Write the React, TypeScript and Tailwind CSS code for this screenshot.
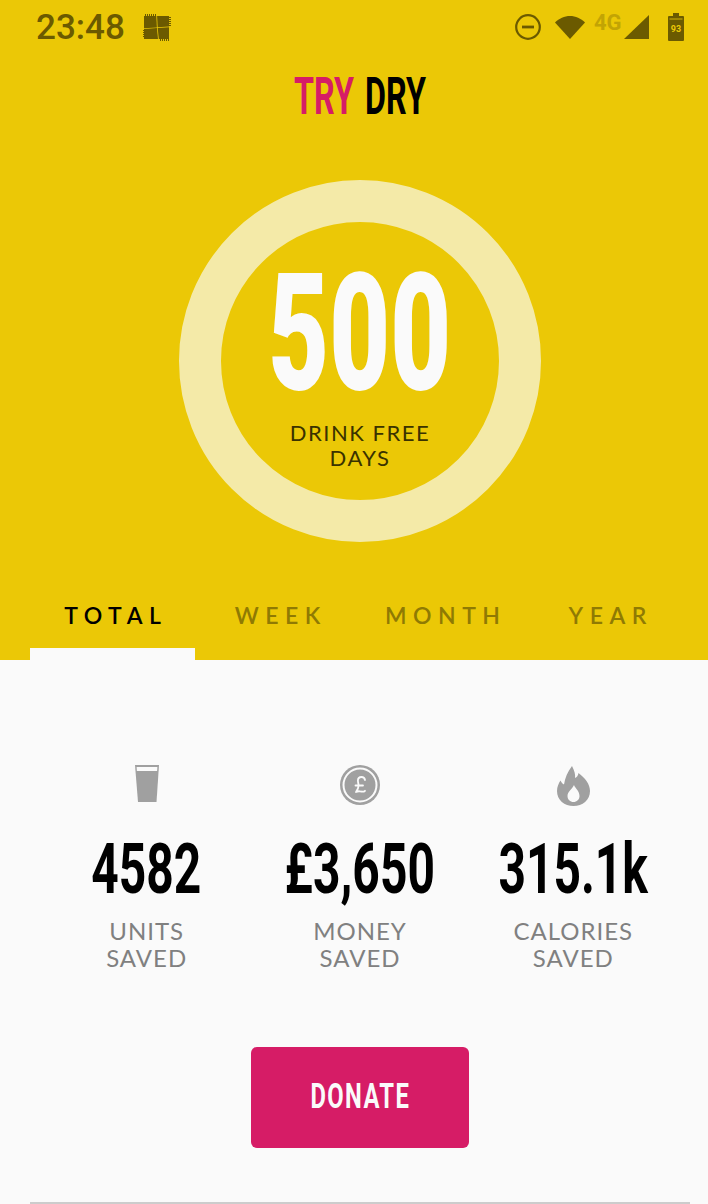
import React from "react";

const condensed = "font-['Roboto',sans-serif]";
const label = "font-['Lato',sans-serif]";

function PatchIcon() {
  return (
    <svg width="28" height="27" viewBox="0 0 28 27" fill="#6b5a00">
      {/* four stitched cloth squares, fringed on their outer edges */}
      <path d="M1 2h12.300l.6 11.400L1 14.200Z" />
      <path d="M14.100 2h11.900v10.600l-11.300.7Z" />
      <path d="M1 14.900l12.900-.8L15 25H1Z" />
      <path d="M14.700 14L26 13.300V25H15.800Z" />
      <path d="M2 0h1v2H2ZM4 0h1v2H4ZM6 0h1v2H6ZM8 0h1v2H8ZM10 0h1v2h-1ZM12 0h1v2h-1Z" />
      <path d="M26 3h2v1h-2ZM26 5h2v1h-2ZM26 7h2v1h-2ZM26 9h2v1h-2ZM26 11h2v1h-2Z" />
      <path d="M0 16h1v1H0ZM0 18h1v1H0ZM0 20h1v1H0ZM0 22h1v1H0Z" />
      <path d="M17 25h1v2h-1ZM19 25h1v2h-1ZM21 25h1v2h-1ZM23 25h1v2h-1ZM25 25h1v2h-1Z" />
    </svg>
  );
}

function StatusIcons() {
  return (
    <div className="flex items-center">
      <svg width="26" height="26" viewBox="0 0 26 26" fill="none" stroke="#6b5a00">
        <circle cx="13" cy="13" r="11.800" strokeWidth="2.200" />
        <path d="M7 13h12" strokeWidth="2.800" />
      </svg>
      <svg width="30" height="26" viewBox="0 0 30 26" fill="#6b5a00" className="ml-[14px]">
        <path d="M0 8.500C4 4.500 9.500 2 15 2s11 2.500 15 6.500L15 25Z" />
      </svg>
      <span className="ml-[9px] w-[30px] -translate-y-[4px] font-['Roboto',sans-serif] text-[22px] leading-none font-bold text-[#c2a404]">4G</span>
      <svg width="26" height="26" viewBox="0 0 26 26" fill="#6b5a00">
        <path d="M25 1v24H0Z" />
      </svg>
      <svg width="18" height="28" viewBox="0 0 18 28" className="ml-[17px]">
        <path d="M6 0h6v3h4a1 1 0 0 1 1 1v23a1 1 0 0 1-1 1H2a1 1 0 0 1-1-1V4a1 1 0 0 1 1-1h4Z" fill="#6b5a00" />
        <path d="M2.500 6h13" stroke="#ebc806" strokeWidth=".8" />
        <text x="9" y="19" textAnchor="middle" fontSize="9" fontWeight="700" fontFamily="Roboto, sans-serif" fill="#ebc806">93</text>
      </svg>
    </div>
  );
}

function PintIcon() {
  return (
    <svg width="24" height="37" viewBox="0 0 24 37">
      <path d="M0 0h24l-2.500 37H3Z" fill="#a0a0a0" />
      <path d="M1.600 2h20.800l-.3 4H1.900Z" fill="#fafafa" />
    </svg>
  );
}

function CoinIcon() {
  return (
    <svg width="40" height="40" viewBox="0 0 40 40">
      <circle cx="20" cy="20" r="20" fill="#a0a0a0" />
      <circle cx="20" cy="20" r="16.500" fill="none" stroke="#fafafa" strokeWidth="2" />
      <path d="M25 15c-.4-2.200-1.800-3-3.500-3-2.300 0-3.600 1.500-3.600 3.600 0 2 .7 3.200.7 5 0 2.400-.9 4-2.600 6.400 1.800-1 3-1 4.800-.5 1.800.4 3.100.4 4.200-.7M15.500 20.500h7.500" fill="none" stroke="#fafafa" strokeWidth="1.800" strokeLinecap="round" strokeLinejoin="round" />
    </svg>
  );
}

function FlameIcon() {
  return (
    <svg width="33" height="40" viewBox="0 0 33 40" className="mt-[1px]">
      <path d="M15 0c2.500 5 3.500 8 3 12 2-.8 3-2.500 3.500-5C28 12 33 18 33 25c0 9-7.500 15-16.500 15S0 34 0 25c0-4 1.500-7.500 3.500-10.500 1 2 1.800 3 3.500 4C8 12 10.500 6 15 0Z" fill="#a0a0a0" />
      <path d="M17 19c1 3 5.500 6 5.500 11 0 3.500-2.700 6-6 6s-6-2.500-6-6c0-4.500 4.500-6.500 6.500-11Z" fill="#fafafa" />
    </svg>
  );
}

const stats = [
  { icon: <PintIcon />, value: "4582", l1: "UNITS", l2: "SAVED" },
  { icon: <CoinIcon />, value: "£3,650", l1: "MONEY", l2: "SAVED" },
  { icon: <FlameIcon />, value: "315.1k", l1: "CALORIES", l2: "SAVED" },
];

const tabs = ["TOTAL", "WEEK", "MONTH", "YEAR"];

export default function App() {
  return (
    <div className="h-[1204px] w-[708px] overflow-hidden bg-[#fafafa]">
      {/* the layout runs 720 wide and is clipped by the viewport */}
      <div className="flex h-[1204px] w-[720px] flex-col">
        <div className="flex h-[660px] shrink-0 flex-col bg-[#ebc806]">
          <div className="flex h-[54px] items-center justify-between pr-[35px] pl-[36px]">
            <div className="flex items-center gap-[18px]">
              <span className="font-['Roboto',sans-serif] text-[35px] leading-none font-medium text-[#6b5a00]">23:48</span>
              <PatchIcon />
            </div>
            <StatusIcons />
          </div>

          <h1 className={`${condensed} mt-[15px] flex h-[56px] scale-x-[.62] items-center justify-center gap-[18px] text-[52px] leading-none font-bold`}>
            <span className="text-[#d61c66]">TRY</span>
            <span className="text-black">DRY</span>
          </h1>

          <div className="mt-[55px] flex justify-center">
            <div className="flex h-[362px] w-[362px] flex-col items-center rounded-full border-[42px] border-[#f4eaa8]">
              <span className={`${condensed} mt-[40px] scale-x-[.645] text-[163px] leading-[144px] font-black text-[#fafafa]`}>500</span>
              <span className={`${label} mt-[14px] w-[170px] text-center text-[22px] leading-[25px] tracking-[1.500px] text-[#3a3200]`}>
                DRINK FREE DAYS
              </span>
            </div>
          </div>

          <div className="mt-auto grid grid-cols-4 px-[30px]">
            {tabs.map((t, i) => (
              <div key={t} className="flex h-[106px] flex-col items-center justify-end">
                <span className={`${label} mb-[19px] pl-[6.500px] text-[23px] leading-[28px] font-semibold tracking-[6.500px] ${i === 0 ? "text-black" : "text-[#8f7a03]"}`}>{t}</span>
                <div className={`h-[12px] w-full ${i === 0 ? "bg-[#fafafa]" : ""}`} />
              </div>
            ))}
          </div>
        </div>

        <div className="mt-[105px] grid grid-cols-3 px-[40px]">
          {stats.map((s) => (
            <div key={s.value} className="flex flex-col items-center">
              <div className="flex h-[44px] items-start">{s.icon}</div>
              <span className={`${condensed} mt-[25px] scale-x-[.685] text-[70px] leading-[70px] font-bold text-black`}>{s.value}</span>
              <span className={`${label} mt-[13px] text-[24px] leading-[27px] tracking-[1px] text-[#808080]`}>{s.l1}</span>
              <span className={`${label} text-[24px] leading-[27px] tracking-[1px] text-[#808080]`}>{s.l2}</span>
            </div>
          ))}
        </div>

        <div className="mt-[76px] flex justify-center">
          <button className={`${condensed} h-[101px] w-[218px] rounded-[6px] bg-[#d61c66] text-[35px] font-bold text-[#fafafa]`}>
            <span className="inline-block scale-x-[.68] tracking-[2px]">DONATE</span>
          </button>
        </div>

        <div className="mx-[30px] mt-auto h-[2px] bg-[#cccccc]" />
      </div>
    </div>
  );
}
